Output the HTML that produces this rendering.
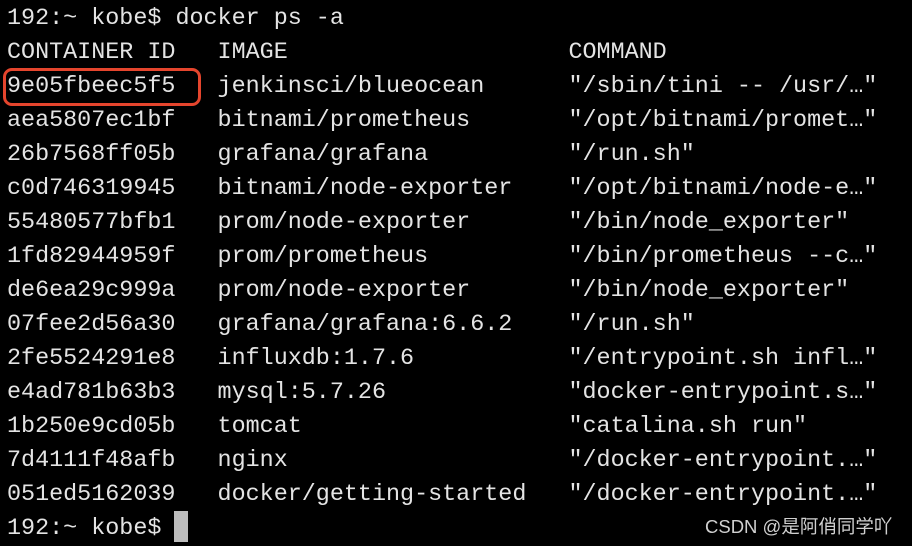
<!DOCTYPE html>
<html><head><meta charset="utf-8"><style>
html,body{margin:0;padding:0;background:#000;width:912px;height:546px;overflow:hidden}
pre{position:absolute;left:7px;top:2px;margin:0;font-family:"Liberation Mono",monospace;font-size:23.4px;line-height:34px;color:#e4e4e4;white-space:pre}
.box{position:absolute;left:3px;top:68px;width:192px;height:32px;border:3px solid #e5452d;border-radius:9px}
.cur{position:absolute;left:174px;top:511px;width:14px;height:31px;background:#bcbcbc}
.wm{position:absolute;left:705px;top:513px;font-family:"Liberation Sans","Noto Sans CJK SC",sans-serif;font-size:18.5px;color:#d0d0d0}
</style></head><body>
<pre>192:~ kobe$ docker ps -a
CONTAINER ID   IMAGE                    COMMAND
9e05fbeec5f5   jenkinsci/blueocean      "/sbin/tini -- /usr/…"
aea5807ec1bf   bitnami/prometheus       "/opt/bitnami/promet…"
26b7568ff05b   grafana/grafana          "/run.sh"
c0d746319945   bitnami/node-exporter    "/opt/bitnami/node-e…"
55480577bfb1   prom/node-exporter       "/bin/node_exporter"
1fd82944959f   prom/prometheus          "/bin/prometheus --c…"
de6ea29c999a   prom/node-exporter       "/bin/node_exporter"
07fee2d56a30   grafana/grafana:6.6.2    "/run.sh"
2fe5524291e8   influxdb:1.7.6           "/entrypoint.sh infl…"
e4ad781b63b3   mysql:5.7.26             "docker-entrypoint.s…"
1b250e9cd05b   tomcat                   "catalina.sh run"
7d4111f48afb   nginx                    "/docker-entrypoint.…"
051ed5162039   docker/getting-started   "/docker-entrypoint.…"
192:~ kobe$ </pre>
<div class="box"></div>
<div class="cur"></div>
<div class="wm">CSDN @是阿俏同学吖</div>
</body></html>
